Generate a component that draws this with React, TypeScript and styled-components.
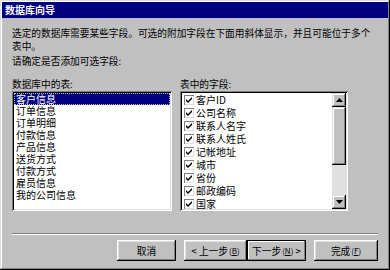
import React from 'react';
import styled, { createGlobalStyle } from 'styled-components';

const C = {
  face: '#c0c0c0',
  shadow: '#808080',
  dark: '#000000',
  light: '#dfdfdf',
  white: '#ffffff',
  navy: '#000080',
  track: '#e0e0e0',
};

const FONT = `"SimSun", "Noto Sans CJK SC", "Liberation Sans", sans-serif`;

const Global = createGlobalStyle`
  html, body { margin: 0; padding: 0; background: ${C.face}; }
  * { box-sizing: border-box; }
`;

const Window = styled.div`
  width: 390px;
  height: 270px;
  background: ${C.face};
  padding: 2px;
  display: flex;
  flex-direction: column;
  font-family: ${FONT};
  font-size: 10px;
  color: #000;
  box-shadow: inset -1px -1px ${C.dark}, inset 1px 1px ${C.light},
    inset -2px -2px ${C.shadow}, inset 2px 2px ${C.white};
`;

const TitleBar = styled.div`
  height: 16px;
  background: ${C.navy};
  color: ${C.white};
  font-weight: bold;
  font-size: 10px;
  line-height: 16px;
  padding-left: 3px;
`;

const Body = styled.div`
  flex: 1;
  display: flex;
  flex-direction: column;
  padding: 9px 10px 0 10px;
`;

const Text = styled.div<{ $gap?: number }>`
  font-size: 9.7px;
  line-height: 13px;
  white-space: nowrap;
  margin-top: ${p => p.$gap ?? 0}px;
`;

const Columns = styled.div`
  display: flex;
  gap: 8px;
  margin-top: 10px;
`;

const Column = styled.div<{ $w: number }>`
  width: ${p => p.$w}px;
  display: flex;
  flex-direction: column;
`;

const Label = styled.div`
  font-size: 9.7px;
  line-height: 13px;
  height: 13px;
`;

const ListBox = styled.div`
  height: 120px;
  background: ${C.white};
  padding: 2px;
  display: flex;
  overflow: hidden;
  box-shadow: inset 1px 1px ${C.shadow}, inset -1px -1px ${C.white},
    inset 2px 2px ${C.dark}, inset -2px -2px ${C.light};
`;

const Rows = styled.div`
  flex: 1;
  overflow: hidden;
`;

const Row = styled.div<{ $selected?: boolean; $h: number }>`
  height: ${p => p.$h}px;
  line-height: ${p => p.$h}px;
  padding-left: 2px;
  display: flex;
  align-items: center;
  gap: 2px;
  white-space: nowrap;
  background: ${p => (p.$selected ? C.navy : 'transparent')};
  color: ${p => (p.$selected ? C.white : '#000')};
  outline: ${p => (p.$selected ? `1px dotted ${C.face}` : 'none')};
  outline-offset: -1px;
`;

const Check = styled.span`
  width: 10px;
  height: 10px;
  flex: none;
  background: ${C.white};
  display: inline-flex;
  align-items: center;
  justify-content: center;
  box-shadow: inset 1px 1px ${C.shadow}, inset -1px -1px ${C.light};
`;

const ScrollBar = styled.div`
  width: 14px;
  flex: none;
  display: flex;
  flex-direction: column;
  background: ${C.track};
`;

const Raised = styled.div<{ $h?: number; $grow?: boolean }>`
  height: ${p => (p.$h ? `${p.$h}px` : 'auto')};
  flex: ${p => (p.$grow ? 1 : 'none')};
  background: ${C.face};
  display: flex;
  align-items: center;
  justify-content: center;
  box-shadow: inset -1px -1px ${C.dark}, inset 1px 1px ${C.light},
    inset -2px -2px ${C.shadow}, inset 2px 2px ${C.white};
`;

const Track = styled.div`
  flex: 1;
`;

const Separator = styled.div`
  height: 2px;
  margin: 22px 0 0 0;
  width: 366px;
  border-top: 1px solid ${C.shadow};
  border-bottom: 1px solid ${C.white};
`;

const ButtonRow = styled.div`
  display: flex;
  justify-content: flex-end;
  margin-top: 5px;
  padding-right: 0;
  width: 366px;
`;

const Button = styled.div<{ $w: number; $focus?: boolean; $ml?: number }>`
  width: ${p => p.$w}px;
  height: 21px;
  margin-left: ${p => p.$ml ?? 0}px;
  display: flex;
  align-items: center;
  justify-content: center;
  font-size: 9.7px;
  white-space: nowrap;
  background: ${C.face};
  box-shadow: ${p =>
    p.$focus
      ? `inset -1px -1px ${C.dark}, inset 1px 1px ${C.dark}, inset -2px -2px ${C.shadow}, inset 2px 2px ${C.white}`
      : `inset -1px -1px ${C.dark}, inset 1px 1px ${C.white}, inset -2px -2px ${C.shadow}, inset 2px 2px ${C.light}`};
`;

const Key = styled.span`
  font-size: 8px;
  margin-left: 1px;
  u { text-decoration: underline; }
`;

const CheckMark = () => (
  <svg width="8" height="8" viewBox="0 0 8 8">
    <path d="M1 3 L3 5 L7 1 L7 3 L3 7 L1 5 Z" fill="#000" />
  </svg>
);

const Arrow = ({ up }: { up?: boolean }) => (
  <svg width="7" height="4" viewBox="0 0 7 4">
    <path d={up ? 'M3.5 0 L7 4 L0 4 Z' : 'M0 0 L7 0 L3.5 4 Z'} fill="#000" />
  </svg>
);

const tables = ['客户信息', '订单信息', '订单明细', '付款信息', '产品信息', '送货方式', '付款方式', '雇员信息', '我的公司信息'];
const fields = ['客户ID', '公司名称', '联系人名字', '联系人姓氏', '记帐地址', '城市', '省份', '邮政编码', '国家', '联系人职务'];

export default function App() {
  return (
    <>
      <Global />
      <Window>
        <TitleBar>数据库向导</TitleBar>
        <Body>
          <Text>选定的数据库需要某些字段。可选的附加字段在下面用斜体显示，并且可能位于多个</Text>
          <Text>表中。</Text>
          <Text $gap={2}>请确定是否添加可选字段:</Text>
          <Columns>
            <Column $w={160}>
              <Label>数据库中的表:</Label>
              <ListBox>
                <Rows>
                  {tables.map((t, i) => (
                    <Row key={t} $h={12} $selected={i === 0}>{t}</Row>
                  ))}
                </Rows>
              </ListBox>
            </Column>
            <Column $w={168}>
              <Label>表中的字段:</Label>
              <ListBox>
                <Rows>
                  {fields.map(f => (
                    <Row key={f} $h={13}>
                      <Check><CheckMark /></Check>
                      {f}
                    </Row>
                  ))}
                </Rows>
                <ScrollBar>
                  <Raised $h={14}><Arrow up /></Raised>
                  <Raised $h={58} />
                  <Track />
                  <Raised $h={14}><Arrow /></Raised>
                </ScrollBar>
              </ListBox>
            </Column>
          </Columns>
          <Separator />
          <ButtonRow>
            <Button $w={59}>取消</Button>
            <Button $w={63} $ml={8}>&lt; 上一步<Key>(<u>B</u>)</Key></Button>
            <Button $w={59} $focus>下一步<Key>(<u>N</u>)</Key>&nbsp;&gt;</Button>
            <Button $w={64} $ml={8}>完成<Key>(<u>F</u>)</Key></Button>
          </ButtonRow>
        </Body>
      </Window>
    </>
  );
}
